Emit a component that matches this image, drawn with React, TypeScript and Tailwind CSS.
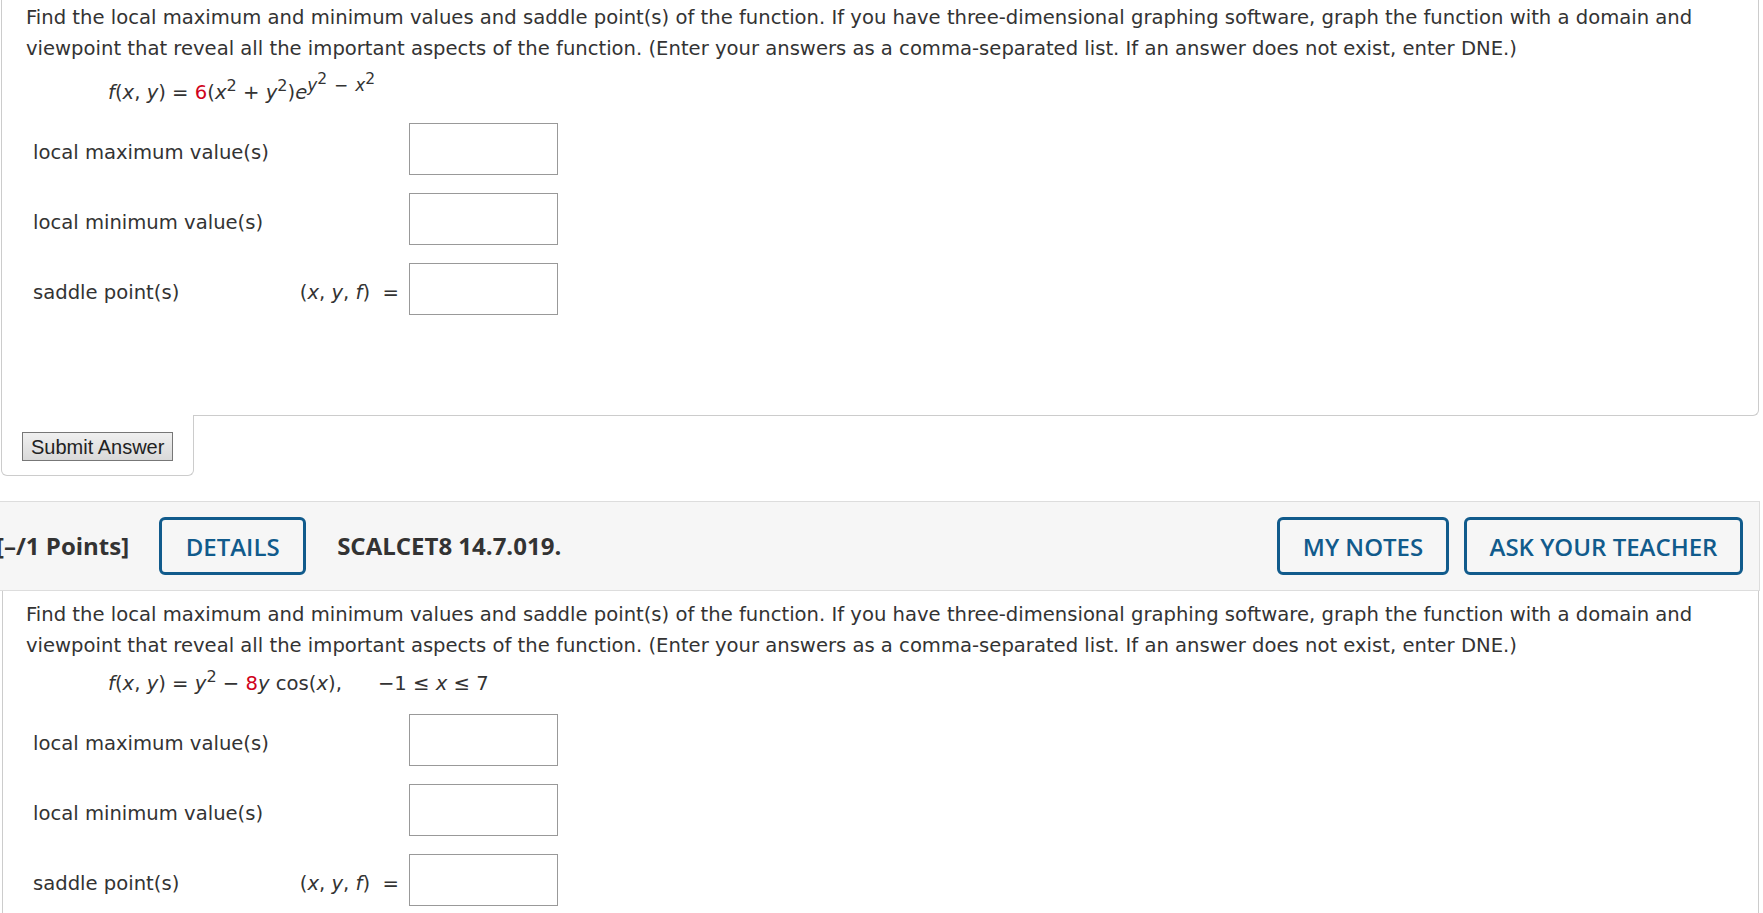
import React from 'react';

const body = { fontFamily: '"DejaVu Sans", Verdana, sans-serif' };
const head = { fontFamily: '"Open Sans", Arial, sans-serif' };

function Row({ label, prefix }: { label: string; prefix?: React.ReactNode }) {
  return (
    <div className="flex items-center h-[52px]">
      <div className="w-[273px] pl-[7px] pt-[6px]">{label}</div>
      <div className="w-[110px] pr-[10px] pt-[6px] text-right">{prefix}</div>
      <div className="w-[149px] h-[52px] border border-[#999] bg-white" />
    </div>
  );
}

const xyf = (
  <span>
    (<i>x</i>, <i>y</i>, <i>f</i>) &nbsp;=
  </span>
);

const intro =
  'Find the local maximum and minimum values and saddle point(s) of the function. If you have three-dimensional graphing software, graph the function with a domain and viewpoint that reveal all the important aspects of the function. (Enter your answers as a comma-separated list. If an answer does not exist, enter DNE.)';

function Questions() {
  return (
    <div className="flex flex-col gap-[18px]">
      <Row label="local maximum value(s)" />
      <Row label="local minimum value(s)" />
      <Row label="saddle point(s)" prefix={xyf} />
    </div>
  );
}

export default function App() {
  return (
    <div className="w-[1763px] h-[913px] overflow-hidden bg-white text-[#333] text-[19.6px] leading-[31px]" style={body}>
      <div className="ml-px w-[1758px]">
        <div className="border-x border-b border-[#ccc] rounded-br-[6px] pl-[24px] pt-[2px] pb-[100px]">
          <p className="pr-[30px]">{intro}</p>
          <div className="pl-[82px] mt-[13px] mb-[15px]">
            <i>f</i>(<i>x</i>, <i>y</i>) = <span className="text-[#d0021b]">6</span>(<i>x</i>
            <sup className="text-[82%]">2</sup> + <i>y</i>
            <sup className="text-[82%]">2</sup>)<i>e</i>
            <sup className="text-[86%] inline-flex items-baseline">
              <i>y</i>
              <span className="relative -top-[0.45em] text-[92%]">2</span>
              <span className="mx-[7px]">−</span>
              <i>x</i>
              <span className="relative -top-[0.45em] text-[92%]">2</span>
            </sup>
          </div>
          <Questions />
        </div>
        <div className="-mt-px w-[193px] h-[61px] bg-white border-x border-b border-[#ccc] rounded-b-[6px] flex items-start pt-[17px] pl-[20px]">
          <button
            className="h-[29px] px-[8px] border border-[#777] bg-gradient-to-b from-[#f0f0f0] to-[#d9d9d9] text-[#222] text-[20px] leading-none"
            style={{ fontFamily: '"Liberation Sans", Arial, sans-serif' }}
          >
            Submit Answer
          </button>
        </div>
      </div>

      <div
        className="mt-[25px] w-[1760px] h-[90px] bg-[#f6f6f6] border-y border-r border-[#ddd] flex items-center"
        style={head}
      >
        <span className="-ml-[4px] -mt-[2px] text-[24px] font-bold text-[#333]">[–/1 Points]</span>
        <button className="ml-[30px] w-[147px] h-[58px] border-[3px] border-[#115b8c] rounded-[6px] text-[#115b8c] text-[24px] font-semibold">
          DETAILS
        </button>
        <span className="ml-[31px] -mt-[2px] text-[24px] font-bold text-[#333]">SCALCET8 14.7.019.</span>
        <div className="ml-auto mr-[16px] flex gap-[15px]">
          <button className="w-[172px] h-[58px] border-[3px] border-[#115b8c] rounded-[6px] text-[#115b8c] text-[24px] font-semibold">
            MY NOTES
          </button>
          <button className="w-[279px] h-[58px] border-[3px] border-[#115b8c] rounded-[6px] text-[#115b8c] text-[24px] font-semibold">
            ASK YOUR TEACHER
          </button>
        </div>
      </div>

      <div className="ml-[2px] w-[1757px] border-x border-[#ccc] pl-[23px] pt-[8px] pb-[40px]">
        <p className="pr-[30px]">{intro}</p>
        <div className="pl-[82px] mt-[7px] mb-[15px] flex items-baseline">
          <span>
            <i>f</i>(<i>x</i>, <i>y</i>) = <i>y</i>
            <sup className="text-[82%]">2</sup> − <span className="text-[#d0021b]">8</span>
            <i>y</i> cos(<i>x</i>),
          </span>
          <span className="ml-[36px]">
            −1 ≤ <i>x</i> ≤ 7
          </span>
        </div>
        <Questions />
      </div>
    </div>
  );
}
